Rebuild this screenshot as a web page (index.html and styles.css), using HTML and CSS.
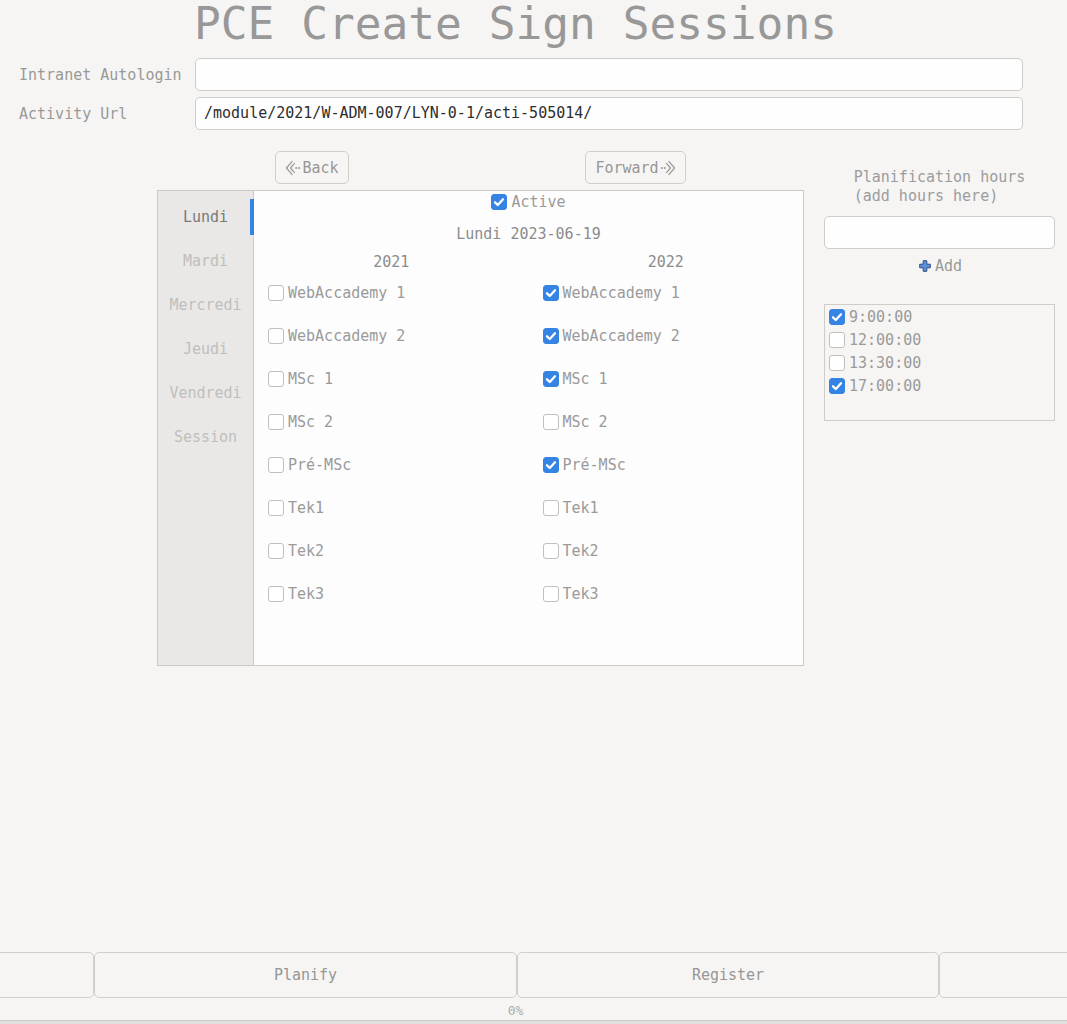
FILE: index.html
```html
<!DOCTYPE html>
<html>
<head>
<meta charset="utf-8">
<link rel="stylesheet" href="styles.css">
</head>
<body>
<div class="app">
  <h1 class="title">PCE Create Sign Sessions</h1>
  <div class="form">
    <div class="frow"><span class="flabel">Intranet Autologin</span><div class="entry"></div></div>
    <div class="frow"><span class="flabel">Activity Url</span><div class="entry">/module/2021/W-ADM-007/LYN-0-1/acti-505014/</div></div>
  </div>
  <div class="main">
    <div class="left">
      <div class="nav">
        <button class="btn nav-btn"><svg class="navicon" width="16" height="16" viewBox="0 0 14 14"><path d="M6.5 1 L1.2 7 L6.5 13 M8.5 2.8 L4.8 7 L8.5 11.2" fill="none" stroke="#9a9a9a" stroke-width="1.1" stroke-linejoin="round"/><circle cx="9.8" cy="7" r="0.9" fill="#9a9a9a"/><circle cx="12.4" cy="7" r="0.9" fill="#9a9a9a"/></svg>Back</button>
        <button class="btn nav-btn">Forward<svg class="navicon" width="16" height="16" viewBox="0 0 14 14"><path d="M7.5 1 L12.8 7 L7.5 13 M5.5 2.8 L9.2 7 L5.5 11.2" fill="none" stroke="#9a9a9a" stroke-width="1.1" stroke-linejoin="round"/><circle cx="4.2" cy="7" r="0.9" fill="#9a9a9a"/><circle cx="1.6" cy="7" r="0.9" fill="#9a9a9a"/></svg></button>
      </div>
      <div class="notebook">
        <div class="tabs">
          <div class="tab active">Lundi</div>
          <div class="tab">Mardi</div>
          <div class="tab">Mercredi</div>
          <div class="tab">Jeudi</div>
          <div class="tab">Vendredi</div>
          <div class="tab">Session</div>
        </div>
        <div class="page">
          <div class="active-row"><span class="cb on"><svg width="16" height="16" viewBox="0 0 16 16"><path d="M4 8.3 L6.8 11 L12 5.3" fill="none" stroke="#fff" stroke-width="2.3" stroke-linecap="round" stroke-linejoin="round"/></svg></span><span class="lbl">Active</span></div>
          <div class="date">Lundi 2023-06-19</div>
          <div class="cols">
            <div class="col">
              <div class="year">2021</div>
              <div class="item"><span class="cb"></span><span class="lbl">WebAccademy 1</span></div>
              <div class="item"><span class="cb"></span><span class="lbl">WebAccademy 2</span></div>
              <div class="item"><span class="cb"></span><span class="lbl">MSc 1</span></div>
              <div class="item"><span class="cb"></span><span class="lbl">MSc 2</span></div>
              <div class="item"><span class="cb"></span><span class="lbl">Pré-MSc</span></div>
              <div class="item"><span class="cb"></span><span class="lbl">Tek1</span></div>
              <div class="item"><span class="cb"></span><span class="lbl">Tek2</span></div>
              <div class="item"><span class="cb"></span><span class="lbl">Tek3</span></div>
            </div>
            <div class="col">
              <div class="year">2022</div>
              <div class="item"><span class="cb on"><svg width="16" height="16" viewBox="0 0 16 16"><path d="M4 8.3 L6.8 11 L12 5.3" fill="none" stroke="#fff" stroke-width="2.3" stroke-linecap="round" stroke-linejoin="round"/></svg></span><span class="lbl">WebAccademy 1</span></div>
              <div class="item"><span class="cb on"><svg width="16" height="16" viewBox="0 0 16 16"><path d="M4 8.3 L6.8 11 L12 5.3" fill="none" stroke="#fff" stroke-width="2.3" stroke-linecap="round" stroke-linejoin="round"/></svg></span><span class="lbl">WebAccademy 2</span></div>
              <div class="item"><span class="cb on"><svg width="16" height="16" viewBox="0 0 16 16"><path d="M4 8.3 L6.8 11 L12 5.3" fill="none" stroke="#fff" stroke-width="2.3" stroke-linecap="round" stroke-linejoin="round"/></svg></span><span class="lbl">MSc 1</span></div>
              <div class="item"><span class="cb"></span><span class="lbl">MSc 2</span></div>
              <div class="item"><span class="cb on"><svg width="16" height="16" viewBox="0 0 16 16"><path d="M4 8.3 L6.8 11 L12 5.3" fill="none" stroke="#fff" stroke-width="2.3" stroke-linecap="round" stroke-linejoin="round"/></svg></span><span class="lbl">Pré-MSc</span></div>
              <div class="item"><span class="cb"></span><span class="lbl">Tek1</span></div>
              <div class="item"><span class="cb"></span><span class="lbl">Tek2</span></div>
              <div class="item"><span class="cb"></span><span class="lbl">Tek3</span></div>
            </div>
          </div>
        </div>
      </div>
    </div>
    <div class="right">
      <div class="plan-title"><span>Planification hours<br>(add hours here)</span></div>
      <div class="entry small"></div>
      <div class="add-row"><button class="add-btn"><svg width="12" height="12" viewBox="0 0 12 12"><path d="M4.2 0.7 H7.8 V4.2 H11.3 V7.8 H7.8 V11.3 H4.2 V7.8 H0.7 V4.2 H4.2 Z" fill="#5b8fd6" stroke="#2c4f86" stroke-width="1" stroke-linejoin="round"/></svg>Add</button></div>
      <div class="hours">
        <div class="hour"><span class="cb on"><svg width="16" height="16" viewBox="0 0 16 16"><path d="M4 8.3 L6.8 11 L12 5.3" fill="none" stroke="#fff" stroke-width="2.3" stroke-linecap="round" stroke-linejoin="round"/></svg></span><span class="lbl">9:00:00</span></div>
        <div class="hour"><span class="cb"></span><span class="lbl">12:00:00</span></div>
        <div class="hour"><span class="cb"></span><span class="lbl">13:30:00</span></div>
        <div class="hour"><span class="cb on"><svg width="16" height="16" viewBox="0 0 16 16"><path d="M4 8.3 L6.8 11 L12 5.3" fill="none" stroke="#fff" stroke-width="2.3" stroke-linecap="round" stroke-linejoin="round"/></svg></span><span class="lbl">17:00:00</span></div>
      </div>
    </div>
  </div>
  <div class="bottom">
    <div class="btnrow">
      <button class="btn big first"></button>
      <button class="btn big w423">Planify</button>
      <button class="btn big w422">Register</button>
      <button class="btn big last"></button>
    </div>
    <div class="progress-label">0%</div>
    <div class="trough"></div>
  </div>
</div>
</body>
</html>
```

FILE: styles.css
```css
* { box-sizing: border-box; }
html, body { margin: 0; padding: 0; }
body {
  background: #f6f5f3;
  font-family: "DejaVu Sans Mono", "Liberation Mono", monospace;
  font-size: 15px;
  color: #8e8e8e;
  width: 1067px;
  height: 1024px;
  overflow: hidden;
}
.app {
  display: flex;
  flex-direction: column;
  height: 1024px;
}
.title {
  margin: 0;
  width: 1031px;
  text-align: center;
  font-weight: normal;
  font-size: 44.5px;
  line-height: 48px;
  color: #989898;
}
.form {
  margin-top: 10px;
  padding-left: 19px;
  display: flex;
  flex-direction: column;
  gap: 6px;
}
.frow {
  display: flex;
  align-items: center;
}
.flabel {
  width: 176px;
  color: #999;
}
.entry {
  width: 828px;
  height: 33px;
  border: 1px solid #d0ccc8;
  border-radius: 5px;
  background: #fefefe;
  color: #2e2e2e;
  padding-left: 8px;
  line-height: 31px;
  white-space: nowrap;
}
.main {
  margin-top: 21px;
  display: flex;
  padding-left: 157px;
}
.left {
  width: 647px;
}
.nav {
  display: flex;
  justify-content: space-between;
  padding: 0 118px;
  height: 33px;
}
.btn {
  font-family: inherit;
  font-size: 15px;
  color: #969696;
  background: #f6f5f3;
  border: 1px solid #d2cfcb;
  border-radius: 5px;
  padding: 0;
  margin: 0;
}
.nav-btn {
  height: 33px;
  display: flex;
  align-items: center;
  justify-content: center;
  gap: 1px;
}
.nav-btn:first-child { width: 74px; }
.nav-btn:last-child { width: 101px; }
.notebook {
  margin-top: 6px;
  height: 476px;
  border: 1px solid #cdc9c5;
  display: flex;
  background: #fdfdfd;
}
.tabs {
  width: 96px;
  background: #e9e8e6;
  border-right: 1px solid #cdc9c5;
  padding-top: 4px;
}
.tab {
  height: 44px;
  display: flex;
  align-items: center;
  justify-content: center;
  color: #c0bebc;
  position: relative;
}
.tab.active { color: #7a7a7a; }
.tab.active::after {
  content: "";
  position: absolute;
  right: -1px;
  top: 4px;
  width: 4px;
  height: 36px;
  background: #3584e4;
}
.page {
  flex: 1;
  padding-top: 1px;
}
.active-row {
  height: 20px;
  display: flex;
  align-items: center;
  justify-content: center;
  gap: 4px;
}
.date {
  margin-top: 13px;
  line-height: 19px;
  text-align: center;
  color: #8c8c8c;
}
.cols {
  display: grid;
  grid-template-columns: 1fr 1fr;
  margin-top: 10px;
}
.year {
  line-height: 17px;
  text-align: center;
  color: #8c8c8c;
}
.item {
  height: 43px;
  display: flex;
  align-items: center;
  gap: 4px;
  padding-left: 14px;
}
.cb {
  width: 16px;
  height: 16px;
  flex: none;
  border: 1px solid #c3bfbb;
  border-radius: 3px;
  background: #fff;
  display: inline-block;
  position: relative;
}
.cb.on {
  background: #3584e4;
  border-color: #3584e4;
}
.cb.on svg {
  position: absolute;
  left: -1px;
  top: -1px;
}
.lbl {
  color: #9a9a9a;
  white-space: nowrap;
}
.right {
  margin-left: 20px;
  width: 231px;
  padding-top: 17px;
}
.plan-title {
  text-align: center;
  line-height: 19px;
  color: #9c9c9c;
}
.plan-title span {
  display: inline-block;
  text-align: left;
}
.entry.small {
  width: 231px;
  margin-top: 10px;
}
.add-row {
  display: flex;
  justify-content: center;
  height: 28px;
  margin-top: 3px;
}
.add-btn {
  font-family: inherit;
  font-size: 15px;
  color: #999;
  background: transparent;
  border: none;
  padding: 0 0 0 2px;
  display: flex;
  align-items: center;
  gap: 4px;
}
.hours {
  margin-top: 24px;
  height: 117px;
  border: 1px solid #d0ccc8;
  padding: 0 0 0 4px;
}
.hour {
  height: 23px;
  display: flex;
  align-items: center;
  gap: 4px;
}
.bottom {
  margin-top: auto;
}
.btnrow {
  display: flex;
  height: 46px;
  overflow: hidden;
}
.btn.big {
  height: 46px;
  flex: none;
}
.btn.first { width: 104px; margin-left: -10px; }
.btn.w423 { width: 423px; }
.btn.w422 { width: 422px; }
.btn.last { width: 138px; margin-right: -10px; }
.progress-label {
  width: 1031px;
  text-align: center;
  font-size: 13px;
  line-height: 16px;
  height: 22px;
  padding-top: 5px;
  color: #acacac;
}
.trough {
  height: 4px;
  border-top: 1px solid #cac8c5;
  background: #e2e0dd;
}
```
